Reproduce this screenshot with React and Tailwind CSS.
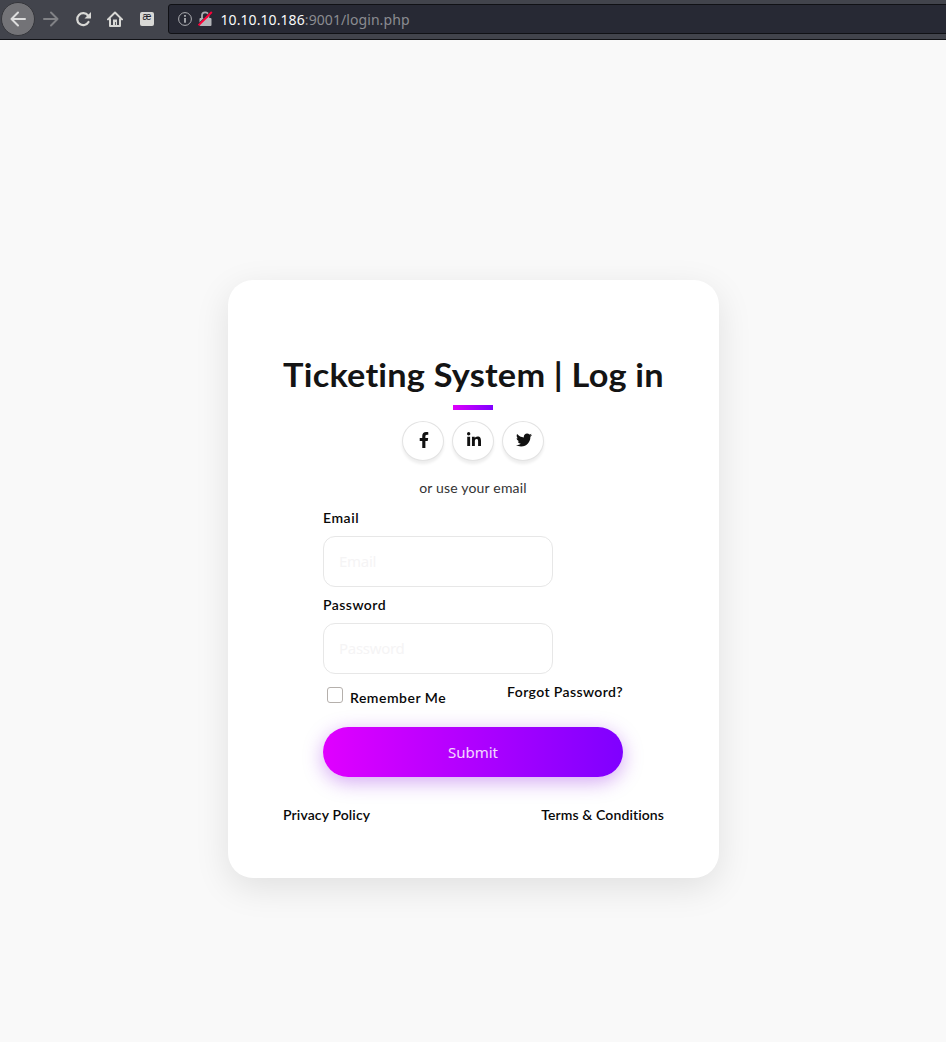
import { FaFacebookF, FaLinkedinIn, FaTwitter } from "react-icons/fa";

const label = "font-['Lato','Noto_Sans',sans-serif] text-[14px] leading-4 font-semibold text-[#080808] whitespace-nowrap";

function BrowserBar() {
  return (
    <header className="flex h-10 items-center overflow-hidden border-b border-[#111216] bg-[#42444c]">
      <button aria-label="Back" className="-mt-px ml-px flex size-[34px] shrink-0 items-center justify-center rounded-full border border-[#35363b] bg-[#737377] text-[#ddd]">
        <svg width="16" height="16" viewBox="0 0 16 16" fill="none" stroke="currentColor" strokeWidth="2" strokeLinecap="round" strokeLinejoin="round"><path d="M15 8H1.5M8 1.5 1.5 8 8 14.5" /></svg>
      </button>
      <svg className="-mt-px ml-2 shrink-0 text-[#818286]" width="16" height="16" viewBox="0 0 16 16" fill="none" stroke="currentColor" strokeWidth="2" strokeLinecap="round" strokeLinejoin="round"><path d="M1 8h13.5M8 1.5 14.5 8 8 14.5" /></svg>
      <svg className="-mt-px ml-4 shrink-0 text-[#d8d8d5]" width="17" height="16" viewBox="0 0 17 16" fill="none" stroke="currentColor" strokeWidth="2.2" strokeLinecap="round"><path d="M13.5 11A6 6 0 1 1 13 4.5l1 1" /><path d="M16 1v6.5H9.5z" fill="currentColor" stroke="none" /></svg>
      <svg className="-mt-px ml-[15px] shrink-0 text-[#d8d8d5]" width="16" height="16" viewBox="0 0 16 16" fill="none" stroke="currentColor" strokeWidth="2" strokeLinecap="round" strokeLinejoin="round"><path d="M1 8.4 8 1.5l7 6.9M3 8v7h10V8" /><path d="M6 14V8.5h4V14h-1.2v-3H8v3z" fill="currentColor" stroke="none" /></svg>
      <span className="-mt-px mr-3.5 ml-[17px] flex h-[14px] w-[14px] shrink-0 items-start justify-center rounded-xs bg-[#d8d8d5] font-['Liberation_Sans',sans-serif] text-[10px] leading-[9px] text-[#202128]">
        æ
      </span>
      <div className="-mt-px -mr-1 flex h-[30px] flex-1 items-center rounded-[3px] border border-[#101115] bg-[#272934] pl-[9px]">
        <svg width="14" height="14" viewBox="0 0 14 14" fill="none" stroke="#adaeb2"><circle cx="7" cy="7" r="6.4" /><path d="M7 6v4.8M7 3v1.7" strokeWidth="1.8" /></svg>
        <svg className="ml-1.5" width="15" height="16" viewBox="0 0 15 16"><path d="M4 8V4.5a3.2 3.2 0 0 1 6.4 0V8" fill="none" stroke="#aaabb0" strokeWidth="1.8" /><rect x="1.5" y="7" width="12" height="8" rx="1" fill="#b4b5b9" /><path d="M.8 13 12.6 1.2" stroke="#272934" strokeWidth="1.5" /><path d="M.5 14.3 13.8 1" stroke="#ff0039" strokeWidth="2" /></svg>
        <span className="mt-px ml-[7.5px] font-['Noto_Sans',sans-serif] text-[14px] leading-5 tracking-[0.08px] text-[#8b8c91]"><span className="text-[#f9f9fa]">10.10.10.186</span>:9001/login.php</span>
      </div>
    </header>
  );
}

function Social({ title, children }) {
  return (
    <a aria-label={title} className="flex h-10 w-[42px] items-center justify-center rounded-[50%] border border-[#e3e3e3] bg-white pb-[2px] pl-px text-[#111] shadow-[0_3px_3px_rgba(0,0,0,0.07)]">
      {children}
    </a>
  );
}

function Field({ name, type, spacing }) {
  return (
    <label className="block h-[87px]">
      <span className={`${label} block ${spacing}`}>{name}</span>
      <input type={type} placeholder={name} className="mt-[10px] block h-[51px] w-[230px] rounded-[12px] border border-[#e7e7e7] bg-white px-[15px] pb-0.5 font-['Noto_Sans',sans-serif] text-[15px] tracking-[-0.3px] outline-none placeholder:text-[#f5f4f5]" />
    </label>
  );
}

export default function App() {
  return (
    <div className="h-[1042px] overflow-hidden bg-[#f9f9f9]">
      <BrowserBar />
      <main className="flex justify-center pt-60 pl-px">
        <section className="flex h-[598px] w-[491px] flex-col items-center rounded-[25px] bg-white pt-[75px] pr-14 pl-[55px] shadow-[0_10px_35px_rgba(0,0,0,0.1)]">
          <h1 className="h-10 origin-center scale-x-[1.055] pl-px font-['Lato','Noto_Sans',sans-serif] text-[32.5px] leading-10 font-bold tracking-[0.2px] whitespace-nowrap text-[#141414] [font-variant-ligatures:none]">Ticketing System | Log in</h1>
          <div className="mt-[10px] h-[5px] w-10 bg-linear-to-r/srgb from-[#df00fb] to-[#8000ff]" />
          <div className="mt-[11px] flex gap-2">
            <Social title="Facebook"><FaFacebookF size={16} /></Social>
            <Social title="LinkedIn"><FaLinkedinIn size={16} /></Social>
            <Social title="Twitter"><FaTwitter size={16} /></Social>
          </div>
          <p className="mt-[19px] font-['Lato','Noto_Sans',sans-serif] text-[14px] leading-4 tracking-[0.18px] whitespace-nowrap text-[#333]">or use your email</p>
          <form className="mt-3.5 w-[300px]">
            <Field name="Email" type="email" spacing="tracking-[0.55px]" />
            <Field name="Password" type="password" spacing="tracking-[0.45px]" />
            <div className="flex h-[43px] justify-between">
              <label className="flex pl-1">
                <input type="checkbox" className="mt-[3px] size-4 appearance-none rounded-[3px] border border-[#b5b0ac] bg-white" />
                <span className={`${label} mt-1.5 ml-[7px] tracking-[0.5px]`}>Remember Me</span>
              </label>
              <a className={`${label} tracking-[0.38px]`}>Forgot Password?</a>
            </div>
            <button type="button" className="block h-[50px] w-full rounded-full bg-linear-to-r/srgb from-[#e000ff] to-[#7f00ff] font-['Noto_Sans',sans-serif] text-[15px] text-white/85 shadow-[0_5px_20px_rgba(128,0,220,0.35)]">Submit</button>
          </form>
          <div className="mt-[30px] flex w-[381px] shrink-0 justify-between self-start">
            <a className={`${label} tracking-[0.12px]`}>Privacy Policy</a>
            <a className={`${label} tracking-[0.1px]`}>Terms &amp; Conditions</a>
          </div>
        </section>
      </main>
    </div>
  );
}
